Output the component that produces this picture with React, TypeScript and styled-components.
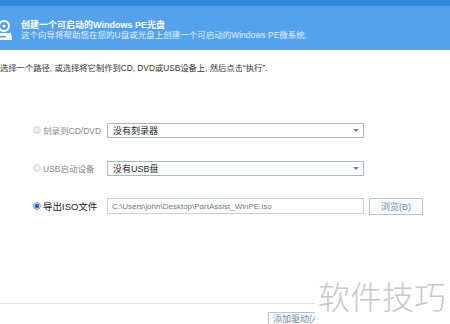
import React from "react";
import styled, { createGlobalStyle } from "styled-components";

const Global = createGlobalStyle`
  html, body { margin: 0; padding: 0; background: #fff; }
  body { width: 450px; height: 324px; overflow: hidden; font-family: "Liberation Sans", "Noto Sans CJK SC", sans-serif; }
`;

const Page = styled.div`
  position: relative;
  width: 450px;
  height: 324px;
  overflow: hidden;
  display: flex;
  flex-direction: column;
  background: #fff;
`;

const TopStrip = styled.div`
  height: 6px;
  background: #2f89de;
`;

const Header = styled.div`
  height: 44px;
  background: #54a2ec;
  display: flex;
  align-items: center;
  gap: 8px;
  box-sizing: border-box;
  padding-top: 4px;
`;

const HeaderIcon = styled.svg`
  margin-left: -3px;
  flex: none;
  margin-top: 2px;
`;

const HeaderText = styled.div`
  display: flex;
  flex-direction: column;
  color: #fff;
`;

const Title = styled.div`
  font-size: 9px;
  font-weight: bold;
  height: 10px;
  line-height: 10px;
`;

const Subtitle = styled.div`
  font-size: 8.5px;
  height: 10px;
  line-height: 10px;
  color: #e4f0fc;
`;

const Instruction = styled.div`
  font-size: 8.3px;
  line-height: 12px;
  height: 12px;
  color: #333;
  padding: 12px 0 0 0;
`;

const Options = styled.div`
  display: flex;
  flex-direction: column;
  gap: 22px;
  padding: 48px 0 0 33px;
`;

const Row = styled.div`
  display: flex;
  align-items: center;
  height: 16px;
`;

const Radio = styled.span<{ $checked?: boolean }>`
  width: 8px;
  height: 8px;
  border-radius: 50%;
  flex: none;
  box-sizing: border-box;
  border: 1px solid ${(p) => (p.$checked ? "#8a9aaa" : "#d8d8d8")};
  background: ${(p) =>
    p.$checked
      ? "radial-gradient(circle, #2a6fb0 0 2px, #cfe0ef 2.5px)"
      : "radial-gradient(circle, #efefef 0 2px, #e2e2e2 4px)"};
`;

const Label = styled.span<{ $active?: boolean }>`
  width: 64px;
  margin-left: 2px;
  font-size: ${(p) => (p.$active ? "9.5px" : "8.5px")};
  color: ${(p) => (p.$active ? "#222" : "#8a8a8a")};
  white-space: nowrap;
`;

const Select = styled.div`
  width: 257px;
  height: 15px;
  box-sizing: border-box;
  border: 1px solid #a9b9cc;
  display: flex;
  align-items: center;
  justify-content: space-between;
  padding: 0 4px 0 5px;
  font-size: 9px;
  color: #222;
  background: #fff;
`;

const Arrow = styled.span`
  width: 0;
  height: 0;
  border-left: 3px solid transparent;
  border-right: 3px solid transparent;
  border-top: 3px solid #6f839c;
`;

const TextInput = styled.div`
  width: 257px;
  height: 16px;
  box-sizing: border-box;
  border: 1px solid #c8ced6;
  display: flex;
  align-items: center;
  padding: 0 4px;
  font-size: 8px;
  color: #777;
  white-space: nowrap;
  overflow: hidden;
`;

const BrowseButton = styled.div`
  margin-left: 5px;
  width: 54px;
  height: 17px;
  box-sizing: border-box;
  border: 1px solid #b3c4d8;
  display: flex;
  align-items: center;
  justify-content: center;
  font-size: 9px;
  color: #6b87ab;
  background: #fafcfe;
`;

const Footer = styled.div`
  margin-top: auto;
  height: 20px;
  border-top: 1px solid #e3e3e3;
  display: flex;
  align-items: flex-end;
  padding-left: 268px;
`;

const FooterButton = styled.div`
  width: 70px;
  height: 12px;
  box-sizing: border-box;
  border-top: 1px solid #b3c4d8;
  border-left: 1px solid #b3c4d8;
  padding: 1px 0 0 4px;
  font-size: 9px;
  line-height: 11px;
  color: #6b87ab;
  white-space: nowrap;
`;

const Watermark = styled.div`
  position: absolute;
  left: 315px;
  top: 278px;
  width: 135px;
  height: 46px;
  background: #fff;
  color: #c8c8c8;
  font-family: "Noto Sans CJK SC", sans-serif;
  font-weight: 300;
  font-size: 32px;
  line-height: 34px;
  padding-left: 3px;
  box-sizing: border-box;
`;

export default function App() {
  return (
    <Page>
      <Global />
      <TopStrip />
      <Header>
        <HeaderIcon width="16" height="22" viewBox="0 0 16 22">
          <circle cx="7" cy="6" r="5" fill="none" stroke="#fff" strokeWidth="2" />
          <circle cx="7" cy="6" r="1.5" fill="#fff" />
          <path d="M1 13 H14 L15 20 H1 Z" fill="#fff" />
          <rect x="3" y="16" width="6" height="1.5" fill="#54a2ec" />
        </HeaderIcon>
        <HeaderText>
          <Title>创建一个可启动的Windows PE光盘</Title>
          <Subtitle>这个向导将帮助您在您的U盘或光盘上创建一个可启动的Windows PE微系统.</Subtitle>
        </HeaderText>
      </Header>
      <Instruction>选择一个路径, 或选择将它制作到CD, DVD或USB设备上, 然后点击“执行”.</Instruction>
      <Options>
        <Row>
          <Radio />
          <Label>刻录到CD/DVD</Label>
          <Select>
            <span>没有刻录器</span>
            <Arrow />
          </Select>
        </Row>
        <Row>
          <Radio />
          <Label>USB启动设备</Label>
          <Select>
            <span>没有USB盘</span>
            <Arrow />
          </Select>
        </Row>
        <Row>
          <Radio $checked />
          <Label $active>导出ISO文件</Label>
          <TextInput>C:\Users\john\Desktop\PartAssist_WinPE.iso</TextInput>
          <BrowseButton>浏览(B)</BrowseButton>
        </Row>
      </Options>
      <Footer>
        <FooterButton>添加驱动(A)</FooterButton>
      </Footer>
      <Watermark>软件技巧</Watermark>
    </Page>
  );
}
